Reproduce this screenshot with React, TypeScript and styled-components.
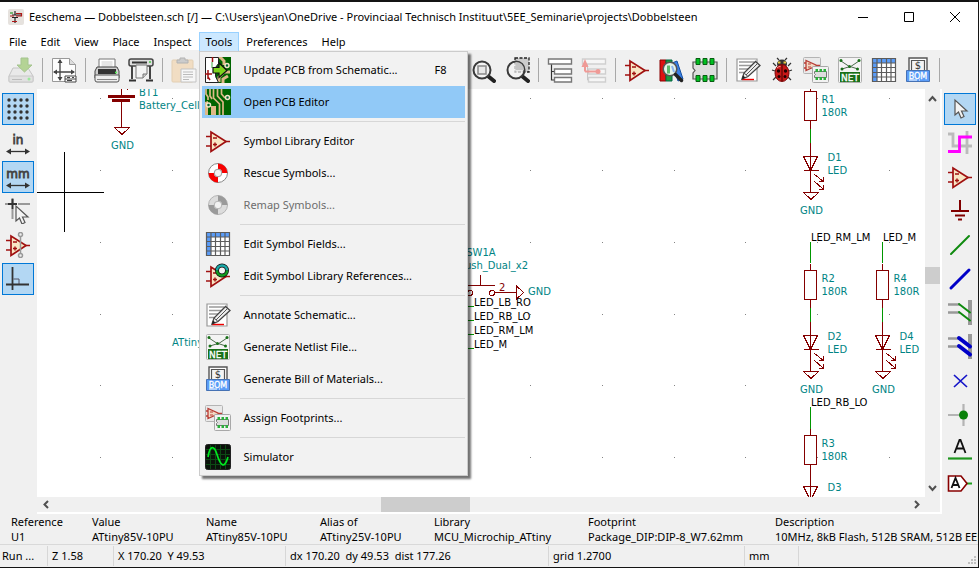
import React from "react";
import styled, { createGlobalStyle, css } from "styled-components";
import { Undo2, Redo2, Search, Replace, RotateCw, ZoomIn, ZoomOut } from "lucide-react";

const GlobalStyle = createGlobalStyle`
  *, *::before, *::after { box-sizing: border-box; }
  html, body, #root { height: 100%; }
  body {
    margin: 0;
    background: #fff;
    color: #000;
    font: 11px/16px "Noto Sans", "Open Sans", sans-serif;
    overflow: hidden;
  }
  button { font: inherit; color: inherit; border: 0; padding: 0; margin: 0; background: none; }
  svg { display: block; flex: none; }
`;

/* ---------- icons ---------- */

const Icon = styled.svg.attrs({ viewBox: "0 0 26 26", "aria-hidden": true })<{ $faded?: boolean }>`
  width: 26px;
  height: 26px;
  opacity: ${(p) => (p.$faded ? 0.5 : 1)};
`;

const SaveIcon = () => (
  <Icon $faded>
    <path d="M5 11h15l5 8v5q0 1-1 1H2q-1 0-1-1v-5z" fill="#e4e4e4" stroke="#9a9a9a" />
    <path d="M1 19h24v5q0 1-1 1H2q-1 0-1-1z" fill="#d4d4d4" stroke="#a4a4a4" />
    <path d="M4 22.500h10" stroke="#888" />
    <circle cx="21" cy="22" r="1.500" fill="#4be04b" />
    <path d="M13 1h7v7h4l-7.500 7L9 8h4z" fill="#79b83c" stroke="#5c9a30" />
  </Icon>
);
const PageIcon = () => (
  <Icon>
    <path d="M1.500 1.500h17l6 6v17h-23z" fill="#fdfdfd" stroke="#999" />
    <path d="M18.500 1.500v6h6" fill="#ddd" stroke="#999" />
    <path d="M9 3v20M3 15h20" stroke="#444" strokeWidth="1.300" />
    <path d="M9 2l-2.500 4h5zM9 24l-2.500-4h5zM2 15l4-2.500v5zM24 15l-4-2.500v5z" fill="#444" />
    <path d="M14 19h11v6H14z" fill="#fff" stroke="#444" />
    <path d="M14 22h11M16 20.500h3M21 20.500h2M16 23.500h5" stroke="#444" />
  </Icon>
);
const PrintIcon = () => (
  <Icon>
    <path d="M5 12V2h16v10z" fill="#fff" stroke="#777" />
    <path d="M7.500 5h11M7.500 7h11M7.500 9h11" stroke="#ccc" />
    <path d="M3 10h20l2 4v7H1v-7z" fill="#cfcfcf" stroke="#444" />
    <path d="M4 12h18v5H4z" fill="#333" />
    <path d="M1 18h24v5q0 2-2 2H3q-2 0-2-2z" fill="#eee" stroke="#555" />
    <path d="M3 22.500h20" stroke="#888" />
    <circle cx="22" cy="15.500" r="1" fill="#5f5" />
  </Icon>
);
const PlotIcon = () => (
  <Icon>
    <path d="M4 9v13M22 9v13" stroke="#444" strokeWidth="2" />
    <path d="M1 23.500h7M18 23.500h7" stroke="#333" strokeWidth="2" />
    <rect x="1" y="2" width="24" height="7" rx="2" fill="#ddd" stroke="#444" strokeWidth="1.500" />
    <path d="M4 5.500h15" stroke="#333" strokeWidth="2" />
    <circle cx="22" cy="5" r="1" fill="#4c4" />
    <path d="M8 8h11v9l-4 4H8z" fill="#f4f4f4" stroke="#777" />
    <path d="M15 21v-4h4" fill="#ccc" stroke="#777" />
  </Icon>
);
const PasteIcon = () => (
  <Icon $faded>
    <rect x="1" y="3" width="21" height="22" rx="1" fill="#f2cc98" stroke="#d8b078" />
    <path d="M6 6V3h3V1h5v2h3v3z" fill="#aaa" stroke="#777" />
    <path d="M10 12h15v13H10z" fill="#fff" stroke="#999" />
    <path d="M12 15h10M12 17.500h10M12 20h10M12 22.500h6" stroke="#888" />
  </Icon>
);
const Lens = () => (
  <g>
    <path d="M18.500 19.500l5.500 4.500" stroke="#222" strokeWidth="4" strokeLinecap="round" />
    <circle cx="12" cy="13" r="8.500" fill="#f4f4f4" fillOpacity=".7" stroke="#3a3a3a" strokeWidth="2" />
  </g>
);
const ZoomFitIcon = () => (
  <Icon>
    <Lens />
    <path d="M8 9h8v8H8z" fill="#e8e8e8" stroke="#888" strokeWidth="1.500" />
  </Icon>
);
const ZoomAreaIcon = () => (
  <Icon>
    <path d="M11 1h14v14H11z" fill="#ccc" stroke="#222" strokeWidth="1.300" strokeDasharray="3 1.500" />
    <Lens />
    <path d="M11.500 5q8 0 8.500 8h-8.500z" fill="#c4c4c4" />
  </Icon>
);
const HierarchyIcon = () => (
  <Icon>
    <path d="M4.500 7v16h4M4.500 14.500h4" fill="none" stroke="#333" strokeWidth="1.200" />
    <path d="M1.500 2h23v5h-23zM7.500 12h17v5h-17zM7.500 20.500h17v4.500h-17z" fill="#fff" stroke="#777" strokeWidth="1.400" />
  </Icon>
);
const LeaveSheetIcon = () => (
  <Icon>
    <path d="M6.500 7v16h4" fill="none" stroke="#c4c4c4" />
    <path d="M1.500 2h23v5h-23zM7.500 12h17v5h-17zM7.500 20.500h17v4.500h-17z" fill="#f6f6f6" stroke="#cfcfcf" strokeWidth="1.400" />
    <path d="M4 14.500h13M4 14.500V8" fill="none" stroke="#ef9a96" strokeWidth="2" />
    <path d="M4 2l-3.500 8h7z" fill="#ef9a96" />
    <circle cx="17" cy="14.500" r="2.500" fill="#ef9a96" />
  </Icon>
);
const OpAmpShape = () => (
  <g fill="none" stroke="#a01010" strokeWidth="1.500">
    <path d="M1 8.500h5M1 18h5M20 13.500h5" />
    <path d="M6 4v19.500l15-10z" fill="#f8e6c4" strokeWidth="1.700" />
    <path d="M8 10h4M8 16.500h4M10 14.500v4" strokeWidth="1.400" />
  </g>
);
const OpAmpIcon = () => (
  <Icon>
    <OpAmpShape />
  </Icon>
);
const LibraryIcon = () => (
  <Icon>
    <path d="M2 3h6v21H2z" fill="#d11" stroke="#800" />
    <path d="M8 3h6v21H8z" fill="#1b9a3a" stroke="#064" />
    <path d="M14 6l5-2 6 18-5 2z" fill="#3a80e8" stroke="#1450a0" />
    <circle cx="12" cy="12" r="6.800" fill="#e4f4ea" stroke="#555" strokeWidth="1.600" />
    <path d="M9 8.500h3v8H9z" fill="#5cba6c" />
    <path d="M14 9l2 6" stroke="#8ab4f0" strokeWidth="2" />
    <path d="M17.500 17.500l6 6" stroke="#222" strokeWidth="3.500" strokeLinecap="round" />
  </Icon>
);
const FootprintIcon = () => (
  <Icon>
    <path d="M1 5h24v17H1v-6l2-2.500L1 11z" fill="#ddd" stroke="#555" strokeWidth="1.200" />
    <path d="M4 1.500h4v6H4zM11 1.500h4v6h-4zM18 1.500h4v6h-4zM4 18.500h4v6H4zM11 18.500h4v6h-4zM18 18.500h4v6h-4z" fill="#00c020" stroke="#085c12" />
  </Icon>
);
const AnnotateIcon = () => (
  <Icon>
    <path d="M2 2h20v22H2z" fill="#fff" stroke="#999" strokeWidth="1.200" />
    <path d="M4 5h15M4 8.500h13M4 12h10M4 15.500h7" stroke="#999" strokeWidth="1.300" />
    <path d="M7 22.500h12" stroke="#f00000" strokeWidth="1.400" />
    <path d="M7 22l2-6L20.500 4.500l4.500 4L13 19.500z" fill="#eee" stroke="#444" strokeWidth="1.300" />
    <path d="M11 18L22 7M9 16l4 3.500" stroke="#555" />
    <path d="M7 22l1-3.500 2.500 2z" fill="#222" />
  </Icon>
);
const BugIcon = () => (
  <Icon>
    <path d="M7 9L4 6M19 9l3-3M6 14l-3-1M20 14l3-1M7 20l-3 3M19 20l3 3M10 3L8 1M16 3l2-2" stroke="#333" strokeWidth="1.200" />
    <ellipse cx="13" cy="7" rx="5" ry="4.500" fill="#333" />
    <path d="M9 4.500h2.500v2H9zM14.500 4.500H17v2h-2.500z" fill="#e8c840" />
    <ellipse cx="13" cy="16" rx="7" ry="8.500" fill="#c81818" stroke="#7a0808" />
    <path d="M13 8v16" stroke="#400" />
    <g fill="#200">
      <circle cx="9.500" cy="14" r="1.700" />
      <circle cx="16.500" cy="14" r="1.700" />
      <circle cx="10" cy="19.500" r="1.500" />
      <circle cx="16" cy="19.500" r="1.500" />
    </g>
    <path d="M8 11q2-2 3.500-1.500" stroke="#f99" fill="none" />
  </Icon>
);
const AssignIcon = () => (
  <Icon>
    <rect x=".5" y=".5" width="17" height="16" rx="1" fill="#eaeaea" stroke="#b4b4b4" />
    <path d="M3 3.500v10l11-5zM1 6h2M1 11h2M13.500 8.500H17" fill="#f3d9c4" stroke="#b83c34" strokeWidth="1.300" />
    <path d="M5 7h3M5 10h3" stroke="#b83c34" />
    <rect x="9.500" y="9.500" width="16" height="16" rx="1" fill="#f2f2f2" stroke="#a8a8a8" />
    <path d="M11.500 14.500h12v6h-12v-2l1-1-1-1z" fill="#ddd" stroke="#777" />
    <path d="M12.500 12h2.500v3h-2.500zM16.500 12H19v3h-2.500zM20.500 12H23v3h-2.500zM12.500 20h2.500v3h-2.500zM16.500 20H19v3h-2.500zM20.500 20H23v3h-2.500z" fill="#2cae3c" />
  </Icon>
);
const IconText = styled.text`
  font-family: "DejaVu Sans", sans-serif;
  text-anchor: middle;
`;
const NetIcon = () => (
  <Icon>
    <rect x="1.500" y=".5" width="23" height="25" rx="1" fill="#f4f4f4" stroke="#b0b0b0" />
    <path d="M4 4l9 6 9-6M5 12l8-2.500 8 2.500" fill="none" stroke="#4a6a4a" />
    <g fill="#187018">
      <circle cx="4" cy="3.500" r="1.500" />
      <circle cx="22" cy="3.500" r="1.500" />
      <circle cx="12.500" cy="9.500" r="1.500" />
      <circle cx="5" cy="12" r="1.500" />
      <circle cx="20.500" cy="12" r="1.500" />
      <path d="M3 15h20v10H3z" />
    </g>
    <IconText x="13" y="23.500" fontSize="9" fill="#fff" stroke="#fff" strokeWidth=".3">NET</IconText>
  </Icon>
);
const TableIcon = () => (
  <Icon>
    <path d="M1.500 1.500h23v23h-23z" fill="#fff" />
    <path d="M1.500 1.500h23V6h-23zM1.500 1.500H6v23H1.500z" fill="#5a9cf8" />
    <path d="M1.500 1.500h23v23h-23zM6 1.500v23M10.500 1.500v23M15.500 1.500v23M20 1.500v23M1.500 6h23M1.500 10.500h23M1.500 15.500h23M1.500 20h23" fill="none" stroke="#5c5c5c" strokeWidth="1.200" />
  </Icon>
);
const BomIcon = () => (
  <Icon>
    <path d="M4 14V1h18v13" fill="#fff" stroke="#555" strokeWidth="1.400" />
    <path d="M6.500 14V3.500h13V14" fill="#f4f4f4" stroke="#555" strokeWidth="1.200" />
    <IconText x="13" y="12" fontSize="10" fill="#333">$</IconText>
    <path d="M1.500 13.500h23v11h-23z" fill="#5a9cf8" stroke="#4672b4" />
    <IconText x="13" y="21.500" fontSize="8" fill="#fff" stroke="#fff" strokeWidth=".3">BOM</IconText>
    <path d="M4 23h8M14 23h1" stroke="#fff" />
  </Icon>
);
const BoardIcon = () => (
  <Icon>
    <path d="M0 0h26v26H0z" fill="#006400" />
    <path d="M0 13l3-1v14H0zM6 17h5v9H6z" fill="#deb887" />
    <g fill="none" stroke="#deb887" strokeWidth="1.700">
      <path d="M1 0v5l2 3v3M5 0v7l2 3M8.500 0v9l6 6v11M12.500 0v7l5.500 6v13M16.500 0v5l3 3.500h2" />
    </g>
    <g fill="#063" stroke="#f4e4c8" strokeWidth="1.500">
      <circle cx="22.500" cy="8.500" r="2" />
      <circle cx="3.500" cy="16" r="2" />
    </g>
  </Icon>
);
const UpdateBoardIcon = () => (
  <Icon>
    <path d="M10 0h16v26H10z" fill="#006400" />
    <path d="M11 0h4l4 4v4M14 25v-5l5-5h6M18 26v-4l5-3" fill="none" stroke="#deb887" strokeWidth="3" />
    <circle cx="22" cy="8.500" r="2" fill="#063" stroke="#f4e4c8" strokeWidth="1.500" />
    <path d="M.5.500h13v6l-3 4v9l3 6H.5z" fill="#fff" stroke="#222" />
    <path d="M7.500 0v5M3 13v9M3 17h4M0 17h3M5 23l-2-3" stroke="#a01010" strokeWidth="1.500" />
    <path d="M7 5v6" stroke="#4a4" />
    <path d="M8 10.500h6V6l8 7.500-8 7v-4.500H8z" fill="#7ed41c" stroke="#111" strokeWidth="1.200" />
  </Icon>
);
const BuoyIcon = ({ muted = false }: { muted?: boolean }) => {
  const band = muted ? "#9a9a9a" : "#f80000";
  return (
    <Icon>
      <circle cx="13" cy="13" r="9.500" fill={muted ? "#dcdcdc" : "#fff"} stroke={muted ? "#b4b4b4" : "#888"} />
      <path d="M13 3.500A9.500 9.500 0 0 1 22.500 13H17a4 4 0 0 0-4-4zM13 22.500A9.500 9.500 0 0 1 3.500 13H9a4 4 0 0 0 4 4z" fill={band} />
      <circle cx="13" cy="13" r="3.800" fill="#f2f2f2" stroke={muted ? "#b4b4b4" : "#999"} />
    </Icon>
  );
};
const LibraryRefsIcon = () => (
  <Icon>
    <OpAmpShape />
    <circle cx="17" cy="7.500" r="5" fill="#f2f2f2" stroke="#111" strokeWidth="4" />
    <g fill="none" strokeWidth="2.500">
      <path d="M12 7.500A5 5 0 0 1 22 7.500" stroke="#1aa8a8" />
      <path d="M22 7.500A5 5 0 0 1 12 7.500" stroke="#129a1e" />
    </g>
  </Icon>
);
const SimIcon = () => (
  <Icon>
    <rect x=".5" y=".5" width="25" height="25" rx="2" fill="#0a120a" stroke="#222" />
    <path d="M5.500 1v24M10.500 1v24M15.500 1v24M20.500 1v24M1 5.500h24M1 10.500h24M1 15.500h24M1 20.500h24" stroke="#0c4a14" />
    <path d="M3 13C5 1 9 1 12 10.500S19 27 23 13" fill="none" stroke="#00e820" strokeWidth="1.700" />
  </Icon>
);
const GridIcon = () => (
  <Icon>
    {[4, 10, 16, 22].map((y) =>
      [4, 10, 16, 22].map((x) => <circle key={`${x}-${y}`} cx={x} cy={y} r="1.700" fill="#333" />),
    )}
  </Icon>
);
const UnitShape = ({ label }: { label: string }) => (
  <Icon>
    <IconText x="13" y="14" fontSize="12" fill="#444" stroke="#444" strokeWidth=".8">{label}</IconText>
    <path d="M4 21.500h18" stroke="#333" strokeWidth="1.300" />
    <path d="M1 21.500l5-3v6zM25 21.500l-5-3v6z" fill="#333" />
  </Icon>
);
const PointerPath = ({ x, y }: { x: number; y: number }) => (
  <path
    transform={`translate(${x} ${y})`}
    d="M0 0v15l3.500-3 2.500 6 3-1.500-2.500-5.500H12z"
    fill="#f4f4f4"
    stroke="#555"
    strokeWidth="1.200"
  />
);
const CursorShapeIcon = () => (
  <Icon>
    <path d="M7.500 0v5M7.500 11v10M0 6h3M13 6h12" stroke="#999" strokeWidth="2" />
    <path d="M7.500 1v10M3 6h9" stroke="#333" strokeWidth="2" />
    <PointerPath x={11} y={8} />
  </Icon>
);
const HiddenPinsIcon = () => (
  <Icon>
    <OpAmpShape />
    <path d="M15.500 4v18" stroke="#999" strokeWidth="1.500" />
    <g fill="#eee" stroke="#999" strokeWidth="1.500">
      <circle cx="15.500" cy="2.500" r="2" />
      <circle cx="15.500" cy="23.500" r="2" />
    </g>
  </Icon>
);
const OrthoIcon = () => (
  <Icon>
    <path d="M8.500 13h5.500v6" fill="none" stroke="#556" />
    <path d="M7.500 1v23M1 18.500h23" stroke="#333" strokeWidth="1.800" />
  </Icon>
);
const SelectIcon = () => (
  <Icon>
    <PointerPath x={8} y={4} />
  </Icon>
);
const HighlightNetIcon = () => (
  <Icon>
    <path d="M1 4h5v12h14M20 1v23M13 16h12" fill="none" stroke="#bbb" strokeWidth="2.800" />
    <path d="M1 21.500h11.500V7H25" fill="none" stroke="#f0f" strokeWidth="2.800" />
  </Icon>
);
const PowerIcon = () => (
  <Icon>
    <path d="M13 2v11M4 13h18M8 17.500h10M11 21.500h4" stroke="#800000" strokeWidth="2" />
  </Icon>
);
const LineIcon = ({ color, width }: { color: string; width: number }) => (
  <Icon>
    <path d="M4 22L22 4" stroke={color} strokeWidth={width} strokeLinecap="round" />
  </Icon>
);
const EntryIcon = ({ color, width }: { color: string; width: number }) => (
  <Icon>
    <path d="M23 0v25" stroke="#999" strokeWidth="4" />
    <path d="M1 4.500h12M1 12.500h12" stroke="#999" strokeWidth="2.500" />
    <path d="M12 4l11 8.500M12 12l11 8.500" stroke={color} strokeWidth={width} strokeLinecap="round" />
  </Icon>
);
const NoConnectIcon = () => (
  <Icon>
    <path d="M7 7l13 12M20 7L7 19" stroke="#1414c8" strokeWidth="1.700" />
  </Icon>
);
const JunctionIcon = () => (
  <Icon>
    <path d="M1 13h15M16.500 2v22" stroke="#b4b4b4" strokeWidth="2.200" />
    <circle cx="16.500" cy="13" r="4.500" fill="#0a820a" />
  </Icon>
);
const LabelIcon = () => (
  <Icon>
    <path d="M7.500 17L12.500 4h1L18.500 17M9 12.500h8" fill="none" stroke="#111" strokeWidth="1.800" />
    <path d="M1 22.500h24" stroke="#1e961e" strokeWidth="2.200" />
  </Icon>
);
const GlobalLabelIcon = () => (
  <Icon>
    <path d="M19 13.500h6" stroke="#1ea01e" strokeWidth="2" />
    <path d="M1.500 6h12.500l6 7.500-6 7.500H1.500z" fill="#fff" stroke="#800" strokeWidth="1.600" />
    <path d="M4.500 18L8.500 8l4 10M6 15h5.500" fill="none" stroke="#111" strokeWidth="1.800" />
  </Icon>
);
const GlyphIcon = ({ glyph: Glyph }: { glyph: React.ElementType }) => <Glyph size={22} color="#444" strokeWidth={2} />;

/* ---------- window frame ---------- */

const Window = styled.div`
  display: flex;
  flex-direction: column;
  height: 100vh;
  min-width: 0;
  border: solid #141414;
  border-width: 2px 1px 1px 0;
  background: #f0f0f0;
  overflow: hidden;
`;
const TitleBar = styled.header`
  display: flex;
  align-items: center;
  flex: none;
  height: 30px;
  padding-left: 8px;
  background: #fff;
`;
const AppIcon = styled.svg`
  width: 16px;
  height: 16px;
`;
const Title = styled.h1`
  flex: 1;
  margin: 0 0 0 5px;
  font: inherit;
  white-space: nowrap;
  overflow: hidden;
`;
const CaptionButton = styled.button`
  display: grid;
  place-items: center;
  flex: none;
  width: 46px;
  height: 30px;
`;
const MenuBar = styled.nav`
  display: flex;
  flex: none;
  height: 18px;
  padding-left: 2px;
  background: #fff;
`;
const MenuSlot = styled.div`
  position: relative;
`;
const MenuButton = styled.button<{ $open?: boolean }>`
  height: 20px;
  padding: 0 6px;
  border: 1px solid transparent;
  line-height: 18px;
  ${(p) =>
    p.$open &&
    css`
      background: #cce8ff;
      border-color: #99d1ff;
    `}
`;

/* ---------- tools menu ---------- */

const Popup = styled.div`
  position: absolute;
  z-index: 2;
  top: 19px;
  left: 0;
  width: 269px;
  padding: 2px;
  border: 1px solid #ccc;
  background: linear-gradient(to right, #f0f0f0 40px, #f2f2f2 40px);
  box-shadow: 3px 3px 2px rgba(0, 0, 0, 0.55);
`;
const MenuItem = styled.button<{ $active?: boolean }>`
  display: flex;
  align-items: center;
  width: 100%;
  height: 32px;
  padding: 0 18px 0 3px;
  gap: 13px;
  text-align: left;
  white-space: nowrap;
  background: ${(p) => (p.$active ? "#91c9f7" : "transparent")};
  &:disabled {
    color: #6d6d6d;
  }
`;
const Shortcut = styled.kbd`
  margin-left: auto;
  font: inherit;
`;
const MenuRule = styled.hr`
  height: 1px;
  margin: 3px 0 3px 38px;
  border: 0;
  background: #d7d7d7;
`;

/* ---------- tool bars ---------- */

const TopToolbar = styled.div`
  display: flex;
  flex: none;
  padding: 3px 0 2px 4px;
  overflow: hidden;
`;
const TopButton = styled.button`
  display: grid;
  place-items: center;
  flex: none;
  width: 34px;
  height: 34px;
`;
const TopRule = styled.div`
  flex: none;
  width: 1px;
  height: 24px;
  margin: 5px 4px;
  background: #a8a8a8;
`;
const Workspace = styled.main`
  display: flex;
  flex: 1;
  min-height: 0;
`;
const SideToolbar = styled.div<{ $right?: boolean }>`
  display: flex;
  flex-direction: column;
  flex: none;
  gap: 2px;
  width: ${(p) => (p.$right ? 36 : 37)}px;
  padding: 4px 2px 0;
  overflow: hidden;
`;
const SideButton = styled.button<{ $on?: boolean }>`
  display: grid;
  place-items: center;
  flex: none;
  width: 32px;
  height: 32px;
  border: 1px solid ${(p) => (p.$on ? "#0078d7" : "transparent")};
  background: ${(p) => (p.$on ? "#b3d7f3" : "transparent")};
`;

/* ---------- drawing area ---------- */

const SheetFrame = styled.section`
  display: grid;
  flex: 1;
  min-width: 0;
  grid-template: minmax(0, 1fr) 15px / minmax(0, 1fr) 15px;
  border: solid #fff;
  border-width: 0 2px 2px 0;
`;
const Sheet = styled.svg`
  width: 100%;
  height: 100%;
  background: #fff;
`;
const SheetText = styled.text`
  font: 10px "DejaVu Sans", sans-serif;
`;
const ScrollTrack = styled.div<{ $horizontal?: boolean }>`
  display: flex;
  flex-direction: ${(p) => (p.$horizontal ? "row" : "column")};
  align-items: stretch;
`;
const ScrollArrow = styled.button`
  display: grid;
  place-items: center;
  flex: none;
  min-width: 15px;
  min-height: 15px;
  flex-basis: 18px;
`;
const ScrollRoom = styled.div<{ $share: number }>`
  flex: ${(p) => p.$share} 1 0;
`;
const ScrollThumb = styled.div<{ $length: number }>`
  flex: 0 0 ${(p) => p.$length}px;
  background: #cdcdcd;
`;

const MAROON = "#840000";
const GREEN = "#009600";
const TEAL = "#008484";

const Ground = ({ x, y }: { x: number; y: number }) => (
  <g>
    <path d={`M${x - 7} ${y}h15l-7.500 7z`} fill="none" stroke={MAROON} />
    <SheetText x={x + 1} y={y + 21} textAnchor="middle" fill={TEAL}>GND</SheetText>
  </g>
);
const Resistor = ({ x, y, name }: { x: number; y: number; name: string }) => (
  <g>
    <path d={`M${x - 6} ${y}h12v29h-12z`} fill="none" stroke={MAROON} />
    <SheetText x={x + 11} y={y + 11} fill={TEAL}>{name}</SheetText>
    <SheetText x={x + 11} y={y + 24} fill={TEAL}>180R</SheetText>
  </g>
);
const Led = ({ x, y, name, label = true }: { x: number; y: number; name: string; label?: boolean }) => (
  <g>
    <path d={`M${x - 7} ${y}h14l-7 14zM${x - 7} ${y + 14}h15`} fill="none" stroke={MAROON} />
    <path
      d={`M${x + 4} ${y + 18}l9 7m0-5v5h-5M${x + 4} ${y + 25}l9 8m0-5v5h-5`}
      fill="none"
      stroke={MAROON}
    />
    <SheetText x={x + 17} y={y + 4} fill={TEAL}>{name}</SheetText>
    {label && <SheetText x={x + 17} y={y + 17} fill={TEAL}>LED</SheetText>}
  </g>
);
const LedBranch = ({ x, y, index }: { x: number; y: number; index: number }) => (
  <g>
    <Resistor x={x} y={y} name={`R${index}`} />
    <path d={`M${x} ${y - 7}v7M${x} ${y + 29}v8M${x} ${y + 51}v50`} stroke={MAROON} />
    <path d={`M${x} ${y + 37}v14`} stroke={GREEN} />
    <Led x={x} y={y + 65} name={`D${index}`} />
    <Ground x={x} y={y + 101} />
  </g>
);
const gridX = [100, 172, 244, 315, 387, 458, 530, 602, 674, 745, 817, 889];
const gridY = [98, 170, 242, 314, 385, 457];
const outputs = ["LED_LB_RO", "LED_RB_LO", "LED_RM_LM", "LED_M"];

const Schematic = () => (
  <Sheet role="img" aria-label="Schematic sheet">
    <g transform="translate(-37 -89)" shapeRendering="crispEdges">
      {gridY.map((y) => gridX.map((x) => <rect key={`${x}-${y}`} x={x} y={y} width="1" height="1" fill="#848484" />))}
      <path d="M121.500 89v6M121.500 102v25M127.500 89v1" stroke={MAROON} />
      <path d="M108 95h27v3h-27zM112 99h18v3h-18z" fill={MAROON} />
      <Ground x={121.5} y={127.5} />
      <SheetText x="139" y="96" fill={TEAL}>BT1</SheetText>
      <SheetText x="139" y="109" fill={TEAL}>Battery_Cell</SheetText>
      <path d="M64.500 152v80M37 192.500h67" stroke="#000" />
      <SheetText x="172" y="346" fill={TEAL}>ATtiny85V-10PU</SheetText>

      <SheetText x="481" y="256" textAnchor="middle" fill={TEAL}>SW1A</SheetText>
      <SheetText x="528" y="269" textAnchor="end" fill={TEAL}>SW_Push_Dual_x2</SheetText>
      <path d="M480.500 275v10M466 285.500h29M494 292.500h22M516.500 286v13l7-6.500z" fill="none" stroke={MAROON} />
      <circle cx="492" cy="293" r="2.500" fill="none" stroke={MAROON} />
      <circle cx="470" cy="293" r="2.500" fill="none" stroke={MAROON} />
      <SheetText x="499" y="291" fill={MAROON}>2</SheetText>
      <SheetText x="528" y="295" fill={TEAL}>GND</SheetText>
      {outputs.map((name, i) => (
        <g key={name}>
          <path d={`M460 ${306.5 + i * 14}h14`} stroke={GREEN} />
          <SheetText x="474" y={306 + i * 14} fill="#000">{name}</SheetText>
        </g>
      ))}

      <LedBranch x={810.5} y={91.5} index={1} />
      <SheetText x="811" y="241" fill="#000">LED_RM_LM</SheetText>
      <path d="M810.500 242v21" stroke={GREEN} />
      <LedBranch x={810.5} y={270.5} index={2} />
      <SheetText x="883" y="241" fill="#000">LED_M</SheetText>
      <path d="M882.500 242v21" stroke={GREEN} />
      <LedBranch x={882.5} y={270.5} index={4} />
      <SheetText x="811" y="406" fill="#000">LED_RB_LO</SheetText>
      <path d="M810.500 407v22" stroke={GREEN} />
      <path d="M810.500 429v7M810.500 465v40" stroke={MAROON} />
      <Resistor x={810.5} y={435.5} name="R3" />
      <Led x={810.5} y={486.5} name="D3" label={false} />
    </g>
  </Sheet>
);

const Chevron = ({ d }: { d: string }) => (
  <svg width="9" height="9" viewBox="0 0 9 9" aria-hidden="true">
    <path d={d} fill="none" stroke="#505050" strokeWidth="2" />
  </svg>
);

/* ---------- message panel and status bar ---------- */

const MessagePanel = styled.dl`
  display: flex;
  flex: none;
  margin: 0;
  padding: 0 0 0 11px;
  border-bottom: 1px solid #d9d9d9;
  line-height: 15px;
  white-space: nowrap;
  overflow: hidden;
`;
const Property = styled.div<{ $width: number }>`
  flex: none;
  width: ${(p) => p.$width}px;
`;
const PropertyName = styled.dt``;
const PropertyValue = styled.dd`
  margin: 0;
`;
const StatusBar = styled.footer`
  display: flex;
  flex: none;
  height: 22px;
  padding: 1px 0;
`;
const StatusField = styled.div<{ $width: number }>`
  flex: none;
  width: ${(p) => p.$width}px;
  padding-left: 4px;
  border-right: 1px solid #d7d7d7;
  line-height: 20px;
  white-space: pre;
  overflow: hidden;
  &:first-child {
    padding-left: 2px;
  }
`;
const SizeGrip = styled.svg`
  align-self: flex-end;
  margin: 0 2px 2px auto;
`;

type Tool = { name: string; icon: React.ReactNode } | null;

const topTools: Tool[] = [
  { name: "Save", icon: <SaveIcon /> },
  null,
  { name: "Page settings", icon: <PageIcon /> },
  null,
  { name: "Print", icon: <PrintIcon /> },
  { name: "Plot", icon: <PlotIcon /> },
  null,
  { name: "Paste", icon: <PasteIcon /> },
  null,
  { name: "Undo", icon: <GlyphIcon glyph={Undo2} /> },
  { name: "Redo", icon: <GlyphIcon glyph={Redo2} /> },
  null,
  { name: "Find", icon: <GlyphIcon glyph={Search} /> },
  { name: "Replace", icon: <GlyphIcon glyph={Replace} /> },
  null,
  { name: "Refresh", icon: <GlyphIcon glyph={RotateCw} /> },
  { name: "Zoom in", icon: <GlyphIcon glyph={ZoomIn} /> },
  { name: "Zoom out", icon: <GlyphIcon glyph={ZoomOut} /> },
  { name: "Zoom to fit", icon: <ZoomFitIcon /> },
  { name: "Zoom to selection", icon: <ZoomAreaIcon /> },
  null,
  { name: "Navigate hierarchy", icon: <HierarchyIcon /> },
  { name: "Leave sheet", icon: <LeaveSheetIcon /> },
  null,
  { name: "Symbol library editor", icon: <OpAmpIcon /> },
  { name: "Browse symbol libraries", icon: <LibraryIcon /> },
  { name: "Footprint editor", icon: <FootprintIcon /> },
  null,
  { name: "Annotate", icon: <AnnotateIcon /> },
  { name: "Electrical rules check", icon: <BugIcon /> },
  { name: "Assign footprints", icon: <AssignIcon /> },
  { name: "Generate netlist", icon: <NetIcon /> },
  { name: "Edit symbol fields", icon: <TableIcon /> },
  { name: "Bill of materials", icon: <BomIcon /> },
  null,
];

const leftTools = [
  { name: "Show grid", icon: <GridIcon />, on: true },
  { name: "Inches", icon: <UnitShape label="in" /> },
  { name: "Millimetres", icon: <UnitShape label="mm" />, on: true },
  { name: "Cursor shape", icon: <CursorShapeIcon /> },
  { name: "Show hidden pins", icon: <HiddenPinsIcon /> },
  { name: "Orthogonal lines", icon: <OrthoIcon />, on: true },
];

const rightTools = [
  { name: "Select", icon: <SelectIcon />, on: true },
  { name: "Highlight net", icon: <HighlightNetIcon /> },
  { name: "Place symbol", icon: <OpAmpIcon /> },
  { name: "Place power port", icon: <PowerIcon /> },
  { name: "Place wire", icon: <LineIcon color="#0e8a0e" width={2} /> },
  { name: "Place bus", icon: <LineIcon color="#0000c8" width={3} /> },
  { name: "Wire to bus entry", icon: <EntryIcon color="#0e8a0e" width={2} /> },
  { name: "Bus to bus entry", icon: <EntryIcon color="#0000c8" width={4} /> },
  { name: "No connection", icon: <NoConnectIcon /> },
  { name: "Junction", icon: <JunctionIcon /> },
  { name: "Net label", icon: <LabelIcon /> },
  { name: "Global label", icon: <GlobalLabelIcon /> },
];

type Entry = { label: string; icon: React.ReactNode; key?: string; active?: boolean; disabled?: boolean } | null;

const toolsMenu: Entry[] = [
  { label: "Update PCB from Schematic...", icon: <UpdateBoardIcon />, key: "F8" },
  { label: "Open PCB Editor", icon: <BoardIcon />, active: true },
  null,
  { label: "Symbol Library Editor", icon: <OpAmpIcon /> },
  { label: "Rescue Symbols...", icon: <BuoyIcon /> },
  { label: "Remap Symbols...", icon: <BuoyIcon muted />, disabled: true },
  null,
  { label: "Edit Symbol Fields...", icon: <TableIcon /> },
  { label: "Edit Symbol Library References...", icon: <LibraryRefsIcon /> },
  null,
  { label: "Annotate Schematic...", icon: <AnnotateIcon /> },
  { label: "Generate Netlist File...", icon: <NetIcon /> },
  { label: "Generate Bill of Materials...", icon: <BomIcon /> },
  null,
  { label: "Assign Footprints...", icon: <AssignIcon /> },
  null,
  { label: "Simulator", icon: <SimIcon /> },
];

const properties = [
  { name: "Reference", value: "U1", width: 81 },
  { name: "Value", value: "ATtiny85V-10PU", width: 114 },
  { name: "Name", value: "ATtiny85V-10PU", width: 114 },
  { name: "Alias of", value: "ATtiny25V-10PU", width: 114 },
  { name: "Library", value: "MCU_Microchip_ATtiny", width: 154 },
  { name: "Footprint", value: "Package_DIP:DIP-8_W7.62mm", width: 187 },
  { name: "Description", value: "10MHz, 8kB Flash, 512B SRAM, 512B EEPROM", width: 300 },
];

const status = [
  { text: "Run ...", width: 48 },
  { text: "Z 1.58", width: 66 },
  { text: "X 170.20  Y 49.53", width: 172 },
  { text: "dx 170.20  dy 49.53  dist 177.26", width: 263 },
  { text: "grid 1.2700", width: 196 },
  { text: "mm", width: 54 },
];

export default function App() {
  return (
    <Window>
      <GlobalStyle />
      <TitleBar>
        <AppIcon viewBox="0 0 16 16" aria-hidden="true">
          <rect width="16" height="16" rx="2" fill="#e6e2de" />
          <path d="M7 2v4M4 6h6M4 8.500h6M7 9v5M10 6h4" stroke="#222" strokeWidth="1.200" />
          <path d="M8 4.500h5.500v2.500H8M2 7h4M4 12.500h5" fill="none" stroke="#b01818" strokeWidth="1.200" />
          <path d="M2 4h3" stroke="#28a028" strokeWidth="1.200" />
        </AppIcon>
        <Title>
          Eeschema — Dobbelsteen.sch [/] — C:\Users\jean\OneDrive - Provinciaal Technisch
          Instituut\5EE_Seminarie\projects\Dobbelsteen
        </Title>
        <CaptionButton aria-label="Minimize">
          <svg width="10" height="10">
            <path d="M0 5.500h10" stroke="#000" />
          </svg>
        </CaptionButton>
        <CaptionButton aria-label="Maximize">
          <svg width="10" height="10">
            <path d="M.5.500h9v9h-9z" fill="none" stroke="#000" />
          </svg>
        </CaptionButton>
        <CaptionButton aria-label="Close">
          <svg width="10" height="10">
            <path d="M0 0l10 10M10 0L0 10" stroke="#000" />
          </svg>
        </CaptionButton>
      </TitleBar>

      <MenuBar>
        {["File", "Edit", "View", "Place", "Inspect", "Tools", "Preferences", "Help"].map((name) => (
          <MenuSlot key={name}>
            <MenuButton $open={name === "Tools"}>{name}</MenuButton>
            {name === "Tools" && (
              <Popup>
                {toolsMenu.map((entry, i) =>
                  entry ? (
                    <MenuItem key={entry.label} $active={entry.active} disabled={entry.disabled}>
                      {entry.icon}
                      <span>{entry.label}</span>
                      {entry.key && <Shortcut>{entry.key}</Shortcut>}
                    </MenuItem>
                  ) : (
                    <MenuRule key={i} />
                  ),
                )}
              </Popup>
            )}
          </MenuSlot>
        ))}
      </MenuBar>

      <TopToolbar>
        {topTools.map((tool, i) =>
          tool ? (
            <TopButton key={i} aria-label={tool.name}>
              {tool.icon}
            </TopButton>
          ) : (
            <TopRule key={i} />
          ),
        )}
      </TopToolbar>

      <Workspace>
        <SideToolbar>
          {leftTools.map((tool) => (
            <SideButton key={tool.name} aria-label={tool.name} $on={tool.on}>
              {tool.icon}
            </SideButton>
          ))}
        </SideToolbar>
        <SheetFrame>
          <Schematic />
          <ScrollTrack>
            <ScrollArrow aria-label="Scroll up">
              <Chevron d="M1 7l3.500-4L8 7" />
            </ScrollArrow>
            <ScrollRoom $share={160} />
            <ScrollThumb $length={17} />
            <ScrollRoom $share={195} />
            <ScrollArrow aria-label="Scroll down">
              <Chevron d="M1 2l3.500 4L8 2" />
            </ScrollArrow>
          </ScrollTrack>
          <ScrollTrack $horizontal>
            <ScrollArrow aria-label="Scroll left">
              <Chevron d="M6 1L2.500 4.500 6 8" />
            </ScrollArrow>
            <ScrollRoom $share={326} />
            <ScrollThumb $length={89} />
            <ScrollRoom $share={437} />
            <ScrollArrow aria-label="Scroll right">
              <Chevron d="M3 1l3.500 3.500L3 8" />
            </ScrollArrow>
          </ScrollTrack>
        </SheetFrame>
        <SideToolbar $right>
          {rightTools.map((tool) => (
            <SideButton key={tool.name} aria-label={tool.name} $on={tool.on}>
              {tool.icon}
            </SideButton>
          ))}
        </SideToolbar>
      </Workspace>

      <MessagePanel>
        {properties.map((p) => (
          <Property key={p.name} $width={p.width}>
            <PropertyName>{p.name}</PropertyName>
            <PropertyValue>{p.value}</PropertyValue>
          </Property>
        ))}
      </MessagePanel>
      <StatusBar>
        {status.map((field) => (
          <StatusField key={field.text} $width={field.width}>
            {field.text}
          </StatusField>
        ))}
        <SizeGrip width="8" height="8" aria-hidden="true">
          <path d="M6 0h2v2H6zM3 3h2v2H3zM6 3h2v2H6zM0 6h2v2H0zM3 6h2v2H3zM6 6h2v2H6z" fill="#bfbfbf" />
        </SizeGrip>
      </StatusBar>
    </Window>
  );
}
